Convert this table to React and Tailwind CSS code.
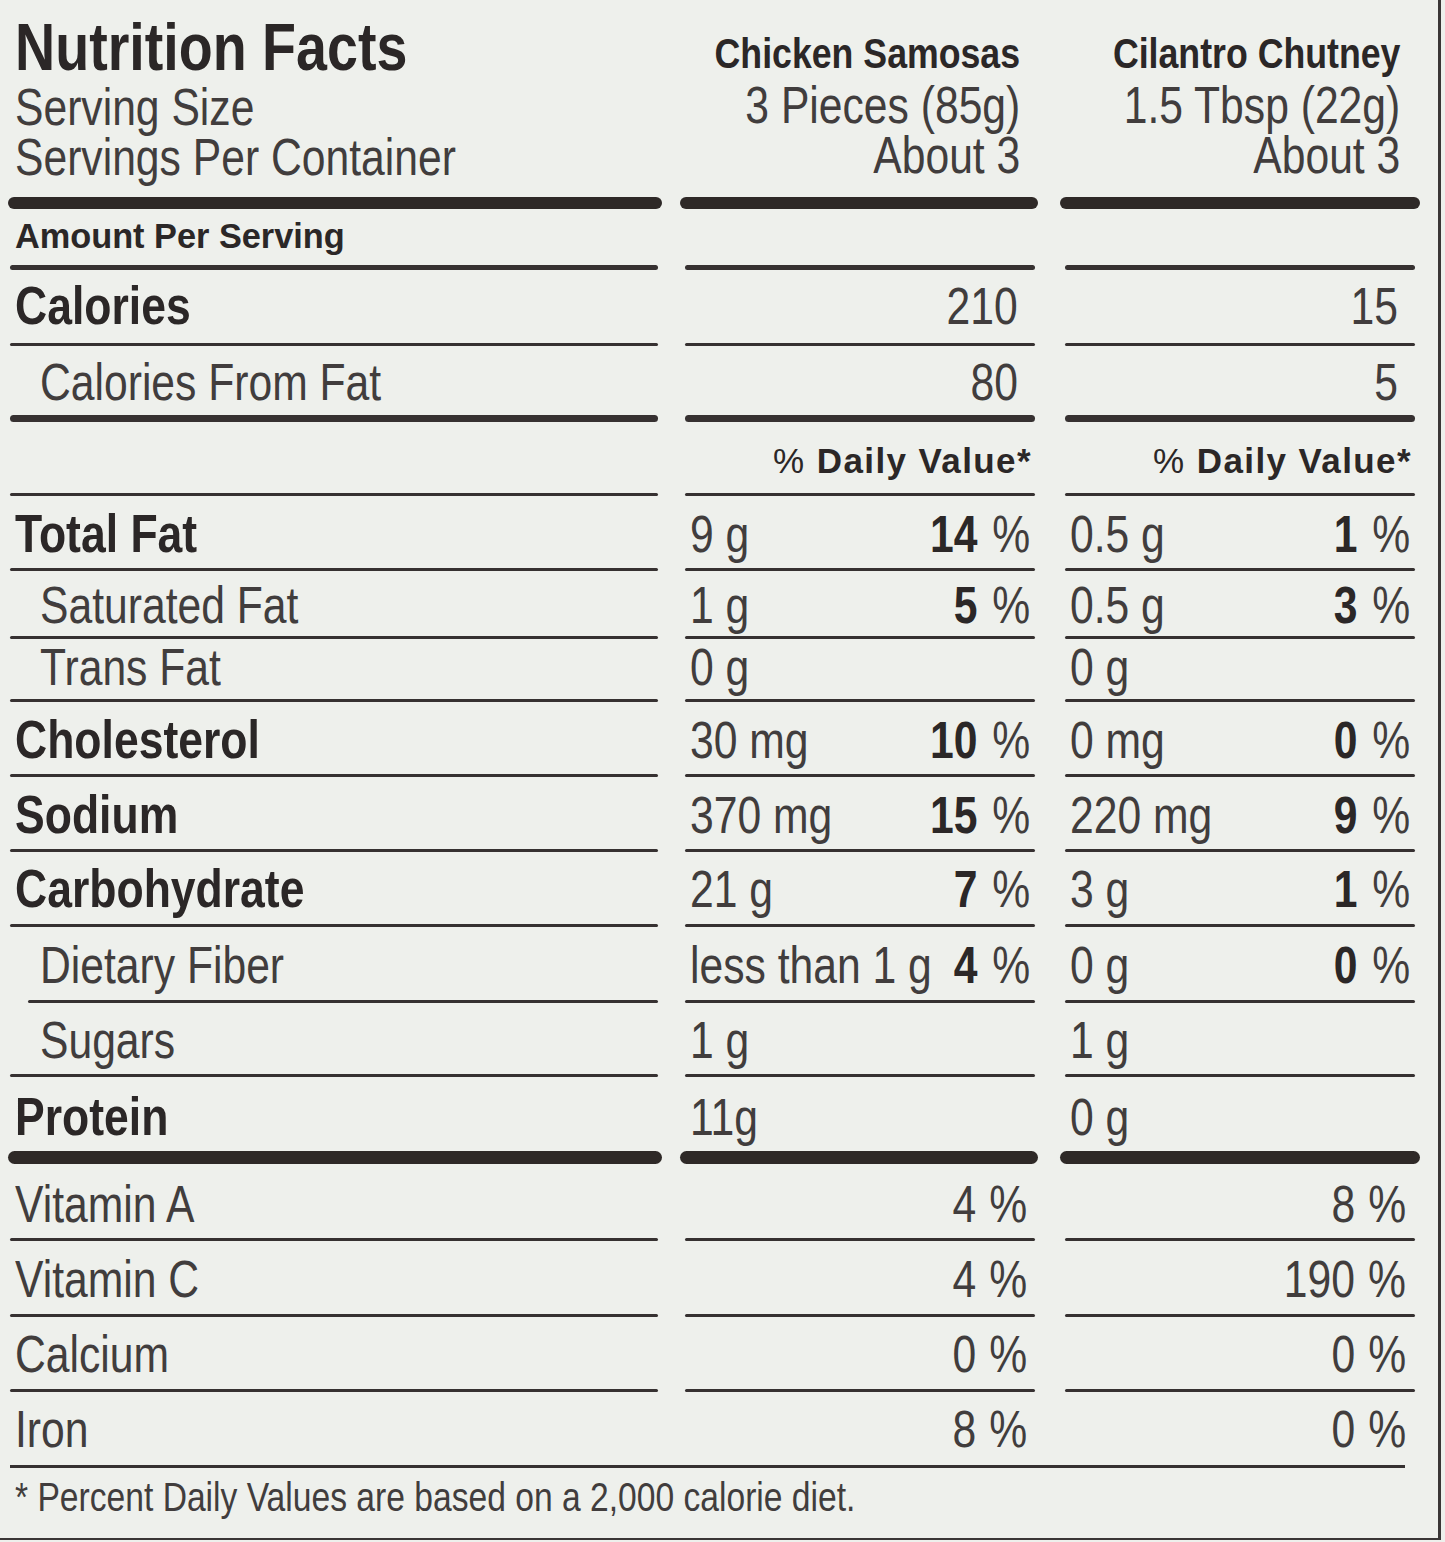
import React from "react";

const FONT = "font-['Liberation_Sans',Arial,sans-serif]";
const INK = "text-[#2b2727]";
const LIGHT = "text-[#413d3d]";

const nutrients = [
  { label: "Total Fat", bold: true, a: "9 g", ap: "14", b: "0.5 g", bp: "1", h: "h-[72px]", pb: "pb-2" },
  { label: "Saturated Fat", a: "1 g", ap: "5", b: "0.5 g", bp: "3", h: "h-[65px]", pb: "pb-[5px]" },
  { label: "Trans Fat", a: "0 g", b: "0 g", h: "h-[60px]", pb: "pb-[6px]" },
  { label: "Cholesterol", bold: true, a: "30 mg", ap: "10", b: "0 mg", bp: "0", h: "h-[72px]", pb: "pb-2" },
  { label: "Sodium", bold: true, a: "370 mg", ap: "15", b: "220 mg", bp: "9", h: "h-[72px]", pb: "pb-2" },
  { label: "Carbohydrate", bold: true, a: "21 g", ap: "7", b: "3 g", bp: "1", h: "h-[72px]", pb: "pb-[9px]" },
  { label: "Dietary Fiber", a: "less than 1 g", ap: "4", b: "0 g", bp: "0", h: "h-[73px]", pb: "pb-[9px]", rule: "fiber" },
  { label: "Sugars", a: "1 g", b: "1 g", h: "h-[71px]", pb: "pb-2" },
  { label: "Protein", bold: true, a: "11g", b: "0 g", h: "h-[74px]", pb: "pb-2", rule: "bar" },
];

const vitamins = [
  { label: "Vitamin A", a: "4", b: "8", h: "h-[74px]", pb: "pb-2" },
  { label: "Vitamin C", a: "4", b: "190", h: "h-[73px]", pb: "pb-[9px]" },
  { label: "Calcium", a: "0", b: "0", h: "h-[72px]", pb: "pb-[9px]" },
  { label: "Iron", a: "8", b: "0", h: "h-[73px]", pb: "pb-[10px]", rule: "full" },
];

// condensed type: Liberation Sans squeezed horizontally
function T({ o = "origin-left", s = "scale-x-[0.82]", className = "", children }) {
  return <span className={`inline-block whitespace-nowrap ${s} ${o} ${className}`}>{children}</span>;
}

function Bar({ h = "h-[12px]" }) {
  return (
    <div className={`flex ${h}`}>
      <div className="ml-[8px] w-[654px] rounded-full bg-[#2e2927]" />
      <div className="ml-[18px] w-[358px] rounded-full bg-[#2e2927]" />
      <div className="ml-[22px] w-[360px] rounded-full bg-[#2e2927]" />
    </div>
  );
}

function Rule({ h = "h-[3px]", fiber }) {
  return (
    <div className={`flex ${h}`}>
      {fiber ? (
        <div className="ml-[28px] w-[630px] rounded-full bg-[#363131]" />
      ) : (
        <div className="ml-[10px] w-[648px] rounded-full bg-[#363131]" />
      )}
      <div className="ml-[27px] w-[350px] rounded-full bg-[#363131]" />
      <div className="ml-[30px] w-[350px] rounded-full bg-[#363131]" />
    </div>
  );
}

function Pct({ n }) {
  if (!n) return null;
  return (
    <T o="origin-right" className="shrink-0">
      <span className={`font-bold ${INK}`}>{n}</span>
      <span className="ml-[18px]">%</span>
    </T>
  );
}

function NutrientRow({ label, bold, a, ap, b, bp, h, pb, rule }) {
  return (
    <>
      <div className={`flex ${h} text-[52px] leading-none ${LIGHT}`}>
        <div className={`ml-[8px] w-[654px] flex items-end ${pb} ${bold ? "pl-[7px]" : "pl-[32px]"}`}>
          {bold ? (
            <T s="scale-x-[0.84]" className={`font-bold text-[53px] ${INK}`}>{label}</T>
          ) : (
            <T>{label}</T>
          )}
        </div>
        <div className={`ml-[18px] w-[358px] flex items-end justify-between pl-[10px] pr-[8px] ${pb}`}>
          <T className="min-w-0 shrink">{a}</T>
          <Pct n={ap} />
        </div>
        <div className={`ml-[22px] w-[360px] flex items-end justify-between pl-[10px] pr-[10px] ${pb}`}>
          <T className="min-w-0 shrink">{b}</T>
          <Pct n={bp} />
        </div>
      </div>
      {rule === "bar" ? <Bar h="h-[13px]" /> : <Rule fiber={rule === "fiber"} />}
    </>
  );
}

function VitaminRow({ label, a, b, h, pb, rule }) {
  return (
    <>
      <div className={`flex ${h} text-[52px] leading-none ${LIGHT}`}>
        <div className={`ml-[8px] w-[654px] flex items-end pl-[7px] ${pb}`}>
          <T>{label}</T>
        </div>
        <div className={`ml-[18px] w-[358px] flex items-end justify-end pr-[11px] ${pb}`}>
          <T o="origin-right">
            {a}
            <span className="ml-[16px]">%</span>
          </T>
        </div>
        <div className={`ml-[22px] w-[360px] flex items-end justify-end pr-[14px] ${pb}`}>
          <T o="origin-right">
            {b}
            <span className="ml-[16px]">%</span>
          </T>
        </div>
      </div>
      {rule === "full" ? (
        <div className="h-[3px] ml-[10px] w-[1395px] bg-[#363131]" />
      ) : (
        <Rule />
      )}
    </>
  );
}

function HeaderCol({ name, size, count }) {
  return (
    <div className="flex flex-col items-end pt-[32px]">
      <T o="origin-right" s="scale-x-[0.83]" className={`text-[43px] leading-none font-bold ${INK}`}>
        {name}
      </T>
      <T o="origin-right" className={`mt-[5px] text-[52px] leading-[50px] ${LIGHT}`}>{size}</T>
      <T o="origin-right" className={`text-[52px] leading-[50px] ${LIGHT}`}>{count}</T>
    </div>
  );
}

export default function App() {
  return (
    <div className={`w-[1445px] h-[1542px] bg-[#eef0ec] ${FONT}`}>
      <div className="w-[1441px] h-[1540px] border-r-[3px] border-b-[2px] border-[#3a3636]">
        {/* title block */}
        <div className="flex h-[197px]">
          <div className="ml-[8px] w-[654px] pl-[7px] pt-[13px] flex flex-col items-start">
            <T s="scale-x-[0.83]" className={`text-[67px] leading-none font-bold ${INK}`}>Nutrition Facts</T>
            <T className={`mt-[2px] text-[52px] leading-[50px] ${LIGHT}`}>Serving Size</T>
            <T className={`text-[52px] leading-[50px] ${LIGHT}`}>Servings Per Container</T>
          </div>
          <div className="ml-[18px] w-[358px] pr-[18px] flex justify-end">
            <HeaderCol name="Chicken Samosas" size="3 Pieces (85g)" count="About 3" />
          </div>
          <div className="ml-[22px] w-[360px] pr-[20px] flex justify-end">
            <HeaderCol name="Cilantro Chutney" size="1.5 Tbsp (22g)" count="About 3" />
          </div>
        </div>
        <Bar />

        <div className="flex h-[56px]">
          <div className={`ml-[8px] w-[654px] pl-[7px] pb-[12px] flex items-end text-[35px] leading-none font-bold ${INK}`}>
            <T s="scale-x-[0.98]">Amount Per Serving</T>
          </div>
        </div>
        <Rule h="h-[5px]" />

        <div className={`flex h-[73px] text-[52px] leading-none ${LIGHT}`}>
          <div className="ml-[8px] w-[654px] pl-[7px] pb-[11px] flex items-end">
            <T s="scale-x-[0.84]" className={`font-bold text-[53px] ${INK}`}>Calories</T>
          </div>
          <div className="ml-[18px] w-[358px] pr-[20px] pb-[11px] flex items-end justify-end">
            <T o="origin-right">210</T>
          </div>
          <div className="ml-[22px] w-[360px] pr-[22px] pb-[11px] flex items-end justify-end">
            <T o="origin-right">15</T>
          </div>
        </div>
        <Rule />

        <div className={`flex h-[69px] text-[52px] leading-none ${LIGHT}`}>
          <div className="ml-[8px] w-[654px] pl-[32px] pb-[7px] flex items-end">
            <T>Calories From Fat</T>
          </div>
          <div className="ml-[18px] w-[358px] pr-[20px] pb-[7px] flex items-end justify-end">
            <T o="origin-right">80</T>
          </div>
          <div className="ml-[22px] w-[360px] pr-[22px] pb-[7px] flex items-end justify-end">
            <T o="origin-right">5</T>
          </div>
        </div>
        <Rule h="h-[7px]" />

        <div className={`flex h-[71px] text-[35px] leading-none font-bold tracking-[1.4px] ${INK}`}>
          <div className="ml-[8px] w-[654px]" />
          <div className="ml-[18px] w-[358px] pr-[6px] pb-[15px] flex items-end justify-end">
            <T o="origin-right" s="scale-x-100">
              <span className="font-normal">%</span> Daily Value*
            </T>
          </div>
          <div className="ml-[22px] w-[360px] pr-[8px] pb-[15px] flex items-end justify-end">
            <T o="origin-right" s="scale-x-100">
              <span className="font-normal">%</span> Daily Value*
            </T>
          </div>
        </div>
        <Rule />

        {nutrients.map((n) => (
          <NutrientRow key={n.label} {...n} />
        ))}

        {vitamins.map((v) => (
          <VitaminRow key={v.label} {...v} />
        ))}

        <div className={`h-[70px] pl-[15px] pt-[9px] text-[41px] leading-none ${LIGHT}`}>
          <T>* Percent Daily Values are based on a 2,000 calorie diet.</T>
        </div>
      </div>
    </div>
  );
}
